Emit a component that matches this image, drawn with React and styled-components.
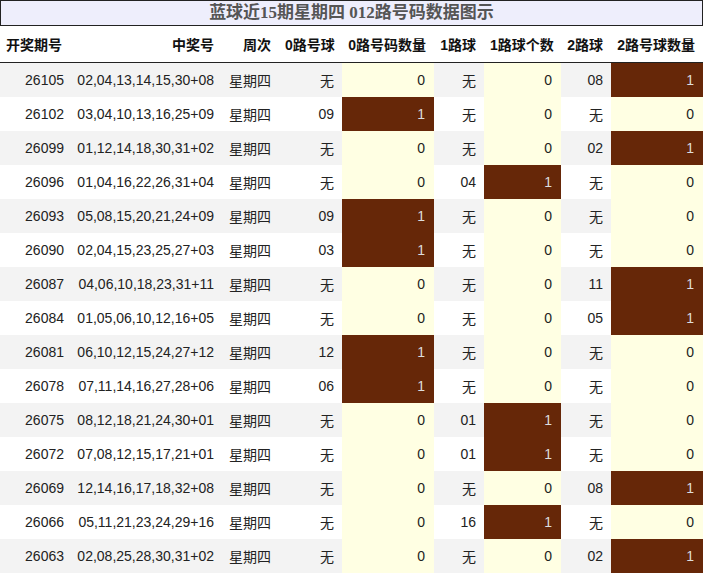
import styled, { createGlobalStyle } from 'styled-components'

const GlobalStyle = createGlobalStyle`
  body {
    margin: 0;
    background: #fff;
    font-family: "Liberation Sans", Arial, "Noto Sans CJK SC", sans-serif;
  }
`

const rows = [
  ["26105", "02,04,13,14,15,30+08", "无", 0, "无", 0, "08", 1],
  ["26102", "03,04,10,13,16,25+09", "09", 1, "无", 0, "无", 0],
  ["26099", "01,12,14,18,30,31+02", "无", 0, "无", 0, "02", 1],
  ["26096", "01,04,16,22,26,31+04", "无", 0, "04", 1, "无", 0],
  ["26093", "05,08,15,20,21,24+09", "09", 1, "无", 0, "无", 0],
  ["26090", "02,04,15,23,25,27+03", "03", 1, "无", 0, "无", 0],
  ["26087", "04,06,10,18,23,31+11", "无", 0, "无", 0, "11", 1],
  ["26084", "01,05,06,10,12,16+05", "无", 0, "无", 0, "05", 1],
  ["26081", "06,10,12,15,24,27+12", "12", 1, "无", 0, "无", 0],
  ["26078", "07,11,14,16,27,28+06", "06", 1, "无", 0, "无", 0],
  ["26075", "08,12,18,21,24,30+01", "无", 0, "01", 1, "无", 0],
  ["26072", "07,08,12,15,17,21+01", "无", 0, "01", 1, "无", 0],
  ["26069", "12,14,16,17,18,32+08", "无", 0, "无", 0, "08", 1],
  ["26066", "05,11,21,23,24,29+16", "无", 0, "16", 1, "无", 0],
  ["26063", "02,08,25,28,30,31+02", "无", 0, "无", 0, "02", 1],
]

const columns = [
  { title: "开奖期号", width: 72, align: "left" },
  { title: "中奖号", width: 150 },
  { title: "周次", width: 57 },
  { title: "0路号球", width: 63 },
  { title: "0路号码数量", width: 92 },
  { title: "1路球", width: 50 },
  { title: "1路球个数", width: 77 },
  { title: "2路球", width: 50 },
  { title: "2路号球数量", width: 92 },
]

const Page = styled.div`
  width: 703px;
`

const Title = styled.div`
  height: 24px;
  border: 1px solid #222;
  background: #eeeefc;
  color: #555;
  font-family: "Liberation Serif", "Noto Sans CJK SC", serif;
  font-weight: bold;
  font-size: 17px;
  line-height: 24px;
  text-align: center;
`

const Table = styled.table`
  width: 703px;
  border-collapse: collapse;
  table-layout: fixed;
  font-size: 14px;
`

const HeadCell = styled.th`
  height: 36px;
  padding: 0 8px 0 6px;
  text-align: ${p => p.$align || 'right'};
  font-weight: bold;
  color: #111;
  border-bottom: 1px solid #222;
  white-space: nowrap;
`

const Row = styled.tr`
  background: ${p => (p.$odd ? '#f3f3f3' : '#fff')};
`

const Cell = styled.td`
  height: 34px;
  padding: 0 8px 0 0;
  text-align: ${p => p.$align || 'right'};
  color: #222;
  white-space: nowrap;
`

const DayCell = styled(Cell)`
  text-align: left;
  padding-left: 7px;
`

const CountCell = styled(Cell)`
  background: ${p => (p.$hit ? '#662708' : '#ffffe3')};
  color: ${p => (p.$hit ? '#ddd' : '#222')};
  padding-right: 9px;
`

const App = () => {
  return (
    <Page>
      <GlobalStyle />
      <Title>蓝球近15期星期四 012路号码数据图示</Title>
      <Table>
        <colgroup>
          {columns.map(c => (
            <col key={c.title} style={{ width: c.width }} />
          ))}
        </colgroup>
        <thead>
          <tr>
            {columns.map(c => (
              <HeadCell key={c.title} $align={c.align}>{c.title}</HeadCell>
            ))}
          </tr>
        </thead>
        <tbody>
          {rows.map((r, i) => (
            <Row key={r[0]} $odd={i % 2 === 0}>
              <Cell>{r[0]}</Cell>
              <Cell>{r[1]}</Cell>
              <DayCell>星期四</DayCell>
              <Cell>{r[2]}</Cell>
              <CountCell $hit={r[3] === 1}>{r[3]}</CountCell>
              <Cell>{r[4]}</Cell>
              <CountCell $hit={r[5] === 1}>{r[5]}</CountCell>
              <Cell>{r[6]}</Cell>
              <CountCell $hit={r[7] === 1}>{r[7]}</CountCell>
            </Row>
          ))}
        </tbody>
      </Table>
    </Page>
  )
}

export default App
